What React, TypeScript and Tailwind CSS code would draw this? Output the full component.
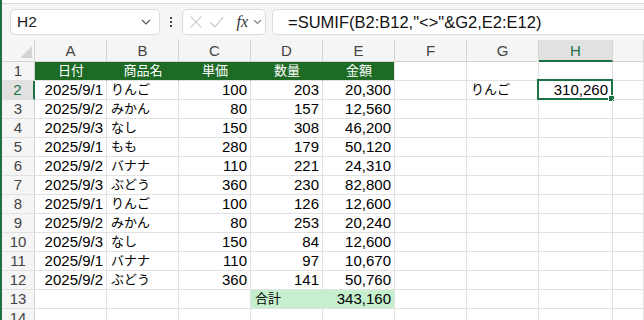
import React from "react";

const cols = ["A", "B", "C", "D", "E", "F", "G", "H", ""];

type Row = [string, string, string, string, string];

const data: Row[] = [
  ["2025/9/1", "りんご", "100", "203", "20,300"],
  ["2025/9/2", "みかん", "80", "157", "12,560"],
  ["2025/9/3", "なし", "150", "308", "46,200"],
  ["2025/9/1", "もも", "280", "179", "50,120"],
  ["2025/9/2", "バナナ", "110", "221", "24,310"],
  ["2025/9/3", "ぶどう", "360", "230", "82,800"],
  ["2025/9/1", "りんご", "100", "126", "12,600"],
  ["2025/9/2", "みかん", "80", "253", "20,240"],
  ["2025/9/3", "なし", "150", "84", "12,600"],
  ["2025/9/1", "バナナ", "110", "97", "10,670"],
  ["2025/9/2", "ぶどう", "360", "141", "50,760"],
];

const headers = ["日付", "商品名", "単価", "数量", "金額"];

const font = { fontFamily: '"Liberation Sans", "Noto Sans CJK JP", sans-serif' };

// japanese text is a bit smaller than the digits
const Jp = ({ children }: { children: React.ReactNode }) => (
  <span className="text-[13px] leading-[17px] pl-[1px]">{children}</span>
);

// plain cell
const Cell = ({
  children,
  align = "left",
  className = "",
}: {
  children?: React.ReactNode;
  align?: "left" | "right" | "center";
  className?: string;
}) => {
  const a = align === "right" ? "justify-end" : align === "center" ? "justify-center" : "justify-start";
  return (
    <div
      className={`relative flex items-end ${a} h-[19px] px-[3px] pb-[1px] text-[15px] leading-[17px] whitespace-nowrap border-r border-b border-[#e1e1e1] text-black ${className}`}
    >
      {children}
    </div>
  );
};

const RowHead = ({ n, active = false }: { n: number; active?: boolean }) => (
  <div
    className={`flex items-end justify-center h-[19px] pb-[1px] text-[15px] leading-[17px] border-b border-[#e1e1e1] ${
      active
        ? "bg-[#e1e1e1] text-[#1e7145] border-r-2 border-r-[#1e7145]"
        : "bg-[#f5f5f5] text-[#444] border-r border-r-[#d4d4d4]"
    }`}
  >
    {n}
  </div>
);

export default function App() {
  return (
    <div className="w-[644px] h-[320px] overflow-hidden bg-white border-l-2 border-[#1e7145]" style={font}>
      {/* ribbon edge */}
      <div className="h-[4px] bg-white border-b border-[#d8d8d8]" />

      {/* formula bar */}
      <div className="h-[36px] bg-[#f5f5f5] flex items-center pl-[8px]">
        <div className="w-[150px] h-[26px] bg-white border border-[#dadada] rounded-[5px] flex items-center justify-between pl-[6px] pr-[8px]">
          <span className="text-[15.5px] text-[#222]">H2</span>
          <svg width="10" height="6" viewBox="0 0 10 6">
            <path d="M1 1l4 4 4-4" fill="none" stroke="#555" strokeWidth="1.2" />
          </svg>
        </div>
        <div className="w-[22px] flex flex-col items-center gap-[2px]">
          <span className="w-[2px] h-[2px] bg-[#444]" />
          <span className="w-[2px] h-[2px] bg-[#444]" />
          <span className="w-[2px] h-[2px] bg-[#444]" />
        </div>
        <div className="w-[84px] h-[26px] bg-white border border-[#dadada] rounded-[5px] flex items-center pl-[5px] pr-[3px]">
          <svg width="14" height="14" viewBox="0 0 14 14" className="ml-[1px]">
            <path d="M1.5 1.5l11 11M12.5 1.5l-11 11" stroke="#c9c9c9" strokeWidth="1.1" />
          </svg>
          <svg width="16" height="14" viewBox="0 0 16 14" className="ml-[6px]">
            <path d="M1.5 7.5l4.5 4.5 8.5-10" fill="none" stroke="#c9c9c9" strokeWidth="1.1" />
          </svg>
          <span
            className="ml-[12px] text-[16px] leading-none italic text-[#333]"
            style={{ fontFamily: '"Liberation Serif", serif' }}
          >
            fx
          </span>
          <svg width="9" height="6" viewBox="0 0 9 6" className="ml-[5px]">
            <path d="M1 1l3.5 3.5 3.5-3.5" fill="none" stroke="#777" strokeWidth="1.1" />
          </svg>
        </div>
        <div className="ml-[6px] flex-1 h-[26px] bg-white border border-r-0 border-[#dadada] rounded-l-[5px] flex items-center pl-[15px]">
          <span className="text-[16.5px] text-[#111] whitespace-nowrap">=SUMIF(B2:B12,"&lt;&gt;"&amp;G2,E2:E12)</span>
        </div>
      </div>

      {/* sheet */}
      <div className="grid grid-cols-[33px_repeat(7,72px)_74px_1fr]">
        {/* column headers */}
        <div className="relative h-[22px] bg-[#f5f5f5] border-r border-b border-[#d4d4d4]">
          <div className="absolute right-[2px] bottom-[3px] w-0 h-0 border-l-[12px] border-l-transparent border-b-[12px] border-b-[#d4d4d4]" />
        </div>
        {cols.map((c, i) =>
          c === "H" ? (
            <div
              key={i}
              className="h-[22px] flex items-center justify-center pt-[2px] text-[15px] bg-[#e1e1e1] text-[#1e7145] border-r border-[#d4d4d4] border-b-2 border-b-[#1e7145]"
            >
              {c}
            </div>
          ) : (
            <div
              key={i}
              className="h-[22px] flex items-center justify-center pt-[2px] text-[15px] bg-[#f5f5f5] text-[#444] border-r border-b border-[#d4d4d4]"
            >
              {c}
            </div>
          )
        )}

        {/* row 1 */}
        <RowHead n={1} />
        {headers.map((h, i) => (
          <Cell
            key={i}
            align="center"
            className={`bg-[#1d6b24] text-white ${i < 4 ? "border-r-[#1d6b24]" : ""}`}
          >
            <Jp>{h}</Jp>
          </Cell>
        ))}
        <Cell />
        <Cell />
        <Cell />
        <Cell />

        {/* data rows */}
        {data.map((r, i) => (
          <React.Fragment key={i}>
            <RowHead n={i + 2} active={i === 0} />
            <Cell align="right">{r[0]}</Cell>
            <Cell>
              <Jp>{r[1]}</Jp>
            </Cell>
            <Cell align="right">{r[2]}</Cell>
            <Cell align="right">{r[3]}</Cell>
            <Cell align="right">{r[4]}</Cell>
            <Cell />
            <Cell>{i === 0 ? <Jp>りんご</Jp> : null}</Cell>
            {i === 0 ? (
              <Cell align="right">
                <div className="absolute left-[-2px] top-[-2px] right-[-1px] bottom-[-1px] border-2 border-[#1e7145] pointer-events-none" />
                <div className="absolute right-[-3px] bottom-[-3px] w-[5px] h-[5px] bg-[#1e7145] border border-white box-content" />
                <span className="pr-[1px]">310,260</span>
              </Cell>
            ) : (
              <Cell />
            )}
            <Cell />
          </React.Fragment>
        ))}

        {/* row 13 */}
        <RowHead n={13} />
        <Cell />
        <Cell />
        <Cell />
        <Cell className="bg-[#c6efce] border-r-[#c6efce]">
          <Jp>合計</Jp>
        </Cell>
        <Cell align="right" className="bg-[#c6efce]">
          343,160
        </Cell>
        <Cell />
        <Cell />
        <Cell />
        <Cell />

        {/* row 14 */}
        <RowHead n={14} />
        {cols.map((_, i) => (
          <Cell key={i} />
        ))}
      </div>
    </div>
  );
}
